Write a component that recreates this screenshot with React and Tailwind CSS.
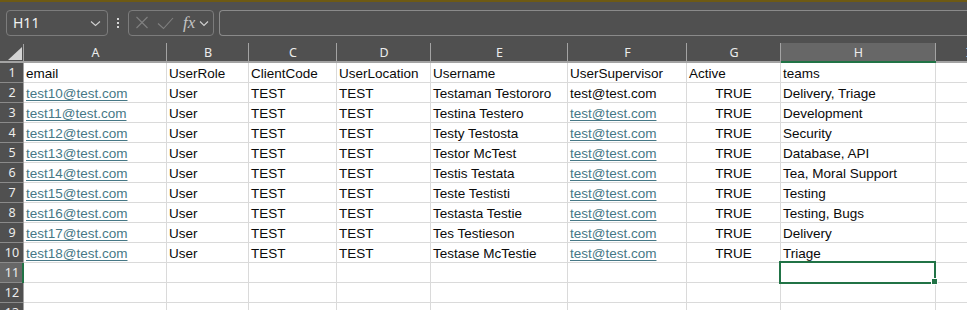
import React from "react";

const COLS = [
  { key: "A", w: "w-[143px]" },
  { key: "B", w: "w-[82px]" },
  { key: "C", w: "w-[88px]" },
  { key: "D", w: "w-[94px]" },
  { key: "E", w: "w-[137px]" },
  { key: "F", w: "w-[119px]" },
  { key: "G", w: "w-[94px]" },
  { key: "H", w: "w-[155px]" },
  { key: "I", w: "w-[64px]" },
];

const people = [
  ["test10@test.com", "Testaman Testororo", false, "Delivery, Triage"],
  ["test11@test.com", "Testina Testero", true, "Development"],
  ["test12@test.com", "Testy Testosta", true, "Security"],
  ["test13@test.com", "Testor McTest", true, "Database, API"],
  ["test14@test.com", "Testis Testata", true, "Tea, Moral Support"],
  ["test15@test.com", "Teste Testisti", true, "Testing"],
  ["test16@test.com", "Testasta Testie", true, "Testing, Bugs"],
  ["test17@test.com", "Tes Testieson", true, "Delivery"],
  ["test18@test.com", "Testase McTestie", true, "Triage"],
];

function t(v) {
  return { v };
}
function link(v) {
  return { v, link: true };
}

const rows = [
  [t("email"), t("UserRole"), t("ClientCode"), t("UserLocation"), t("Username"), t("UserSupervisor"), t("Active"), t("teams"), t("")],
  ...people.map(([email, name, supLink, teams]) => [
    link(email),
    t("User"),
    t("TEST"),
    t("TEST"),
    t(name),
    supLink ? link("test@test.com") : t("test@test.com"),
    { v: "TRUE", center: true },
    t(teams),
    t(""),
  ]),
  Array.from({ length: 9 }, () => t("")),
  Array.from({ length: 9 }, () => t("")),
  Array.from({ length: 9 }, () => t("")),
];

function Cell({ col, cell, selected }) {
  return (
    <div
      className={`${col.w} shrink-0 h-[20px] border-r border-b border-[#dadada] relative ${
        cell.center ? "text-center" : "pl-[2px]"
      } ${selected ? "z-10" : ""}`}
    >
      <div className="h-[19px] leading-[21px] whitespace-nowrap text-[13.5px]">
        {cell.link ? (
          <span className="text-[#467886] underline decoration-1 underline-offset-[2px]">{cell.v}</span>
        ) : (
          <span className="text-[#0a0a0a]">{cell.v}</span>
        )}
      </div>
      {selected && (
        <>
          <div className="absolute left-[-2px] top-[-2px] w-[157px] h-[23px] border-2 border-[#217346]" />
          <div className="absolute left-[150px] top-[15px] w-[7px] h-[7px] bg-[#217346] border border-white" />
        </>
      )}
    </div>
  );
}

export default function App() {
  return (
    <div className="w-[967px] h-[310px] overflow-hidden bg-[#505050] font-['Liberation_Sans',Arial,sans-serif] select-none">
      {/* top strip */}
      <div className="h-[2px] bg-[#6e5a14]" />
      {/* formula bar */}
      <div className="h-[41px] pt-[8px] pl-[6px] flex items-start">
        {/* name box */}
        <div className="w-[102px] h-[26px] rounded-[4px] border border-[#7c7c7c] flex items-center pl-[6px] pr-[6px] justify-between">
          <span className="text-[14px] text-[#f2f2f2] font-['Noto_Sans',sans-serif] leading-none">H11</span>
          <svg width="11" height="7" viewBox="0 0 11 7" className="mt-[1px]">
            <path d="M1 1.5 L5.5 5.5 L10 1.5" stroke="#cfcfcf" strokeWidth="1.1" fill="none" />
          </svg>
        </div>
        {/* dots */}
        <div className="w-[20px] h-[26px] flex flex-col items-center justify-center gap-[2px]">
          <div className="w-[2px] h-[2px] bg-[#d6d6d6]" />
          <div className="w-[2px] h-[2px] bg-[#d6d6d6]" />
          <div className="w-[2px] h-[2px] bg-[#d6d6d6]" />
        </div>
        {/* function box */}
        <div className="w-[86px] h-[26px] rounded-[4px] border border-[#7c7c7c] flex items-center pl-[6px]">
          <svg width="14" height="14" viewBox="0 0 14 14">
            <path d="M1.5 1 L12.5 12 M12.5 1 L1.5 12" stroke="#808080" strokeWidth="1.1" fill="none" />
          </svg>
          <svg width="17" height="13" viewBox="0 0 17 13" className="ml-[8px]">
            <path d="M1 6.5 L6.5 11.5 L16 1" stroke="#808080" strokeWidth="1.1" fill="none" />
          </svg>
          <span className="ml-[9px] text-[17px] italic text-[#c4c4c4] font-['Liberation_Serif',serif] leading-none mt-[-1px]">
            fx
          </span>
          <svg width="10" height="7" viewBox="0 0 10 7" className="ml-[4px] mt-[1px]">
            <path d="M1 1.5 L5 5.5 L9 1.5" stroke="#d0d0d0" strokeWidth="1.1" fill="none" />
          </svg>
        </div>
        {/* formula input */}
        <div className="ml-[5px] flex-1 h-[26px] rounded-l-[4px] border border-r-0 border-[#8a8a8a]" />
      </div>

      {/* column headers */}
      <div className="flex h-[20px]">
        <div className="w-[24px] shrink-0 h-[20px] border-b-2 border-[#a3a3a3] relative">
          <div className="absolute right-0 top-[1px] h-[17px] w-[1px] bg-[#a3a3a3]" />
          <svg width="15" height="13" viewBox="0 0 15 13" className="absolute left-[8px] top-[4px]">
            <path d="M14 0 L14 13 L0 13 Z" fill="#d4d4d4" />
          </svg>
        </div>
        {COLS.map((c) => (
          <div
            key={c.key}
            className={`${c.w} shrink-0 h-[20px] relative border-b-2 ${
              c.key === "H" ? "border-[#217346] bg-[#676767]" : "border-[#a3a3a3]"
            }`}
          >
            <div className="absolute right-0 top-0 h-[18px] w-[1px] bg-[#a3a3a3]" />
            <div className="h-[18px] text-center text-[12.5px] leading-[19px] text-[#ececec] font-['Noto_Sans',sans-serif]">
              {c.key}
            </div>
          </div>
        ))}
      </div>

      {/* rows */}
      <div className="bg-white">
        {rows.map((r, i) => {
          const rowNum = i + 1;
          const selRow = rowNum === 11;
          return (
            <div key={i} className="flex h-[20px]">
              <div
                className={`w-[24px] shrink-0 h-[20px] border-b border-[#8a8a8a] relative text-center text-[12.5px] leading-[20px] text-[#ededed] font-['Noto_Sans',sans-serif] ${
                  selRow ? "bg-[#676767]" : "bg-[#505050]"
                }`}
              >
                {rowNum}
                <div
                  className={`absolute top-0 right-0 h-[20px] ${
                    selRow ? "w-[2px] bg-[#217346]" : "w-[1px] bg-[#a3a3a3]"
                  }`}
                />
              </div>
              {COLS.map((c, j) => (
                <Cell key={c.key} col={c} cell={r[j]} selected={selRow && c.key === "H"} />
              ))}
            </div>
          );
        })}
      </div>
    </div>
  );
}
